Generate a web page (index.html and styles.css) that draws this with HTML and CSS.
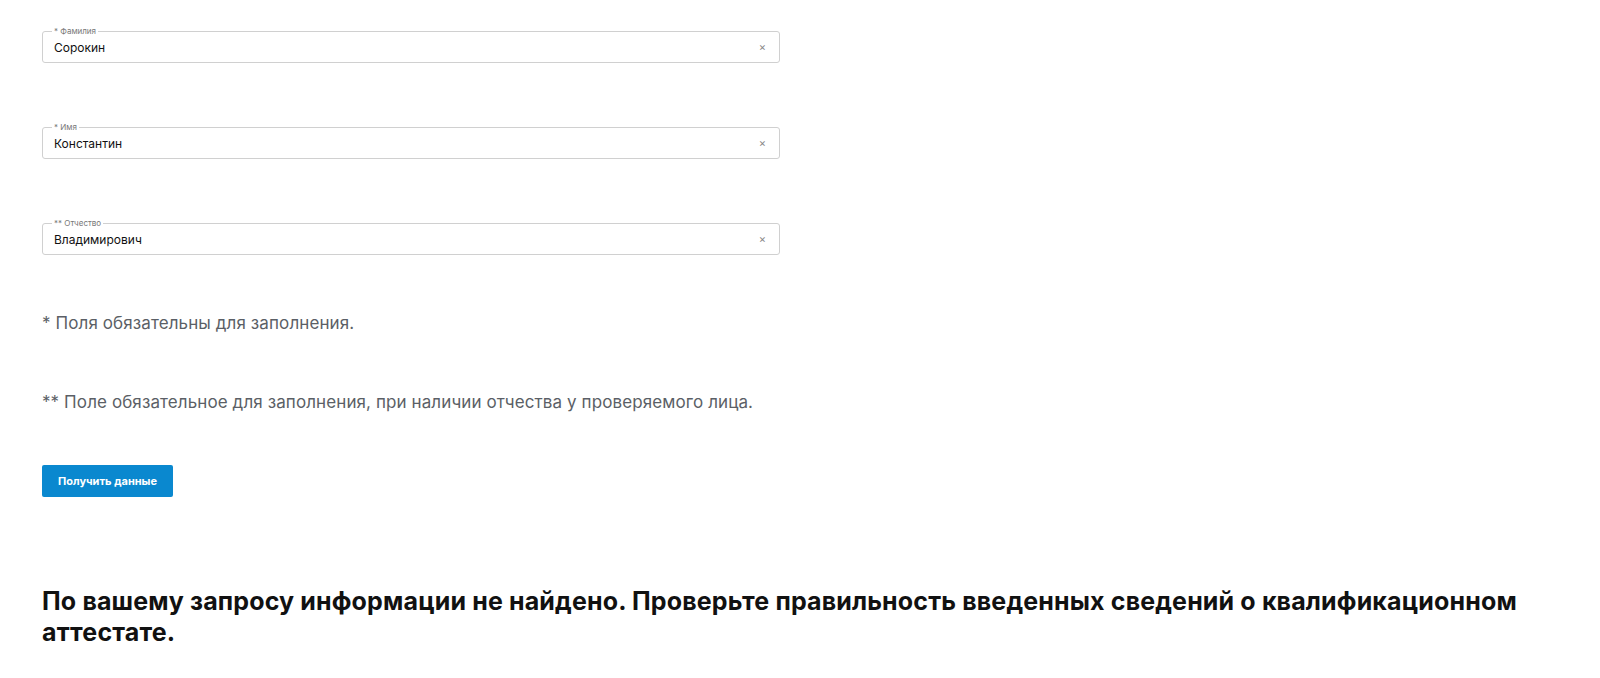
FILE: index.html
```html
<!DOCTYPE html>
<html lang="ru">
<head>
<meta charset="UTF-8">
<title>Проверка аттестата</title>
<link rel="stylesheet" href="styles.css">
</head>
<body>
<div class="page">
  <form class="search-form">
    <div class="field">
      <label>* Фамилия</label>
      <input type="text" value="Сорокин">
      <span class="clear">×</span>
    </div>

    <div class="field">
      <label>* Имя</label>
      <input type="text" value="Константин">
      <span class="clear">×</span>
    </div>

    <div class="field">
      <label>** Отчество</label>
      <input type="text" value="Владимирович">
      <span class="clear">×</span>
    </div>

    <p class="note">* Поля обязательны для заполнения.</p>
    <p class="note">** Поле обязательное для заполнения, при наличии отчества у проверяемого лица.</p>

    <button type="button" class="button">Получить данные</button>
  </form>

  <h3 class="result">По вашему запросу информации не найдено. Проверьте правильность введенных сведений о квалификационном аттестате.</h3>
</div>
</body>
</html>
```

FILE: styles.css
```css
body {
  margin: 0;
  font-family: Inter, "Noto Sans", sans-serif;
  background: #fff;
  color: #000;
}
.page {
  padding: 31px 42px 0 42px;
  width: 1520px;
}
.search-form {
  width: 738px;
}
.field {
  position: relative;
  margin-bottom: 64px;
  height: 32px;
  box-sizing: border-box;
  border: 1px solid #d0d0d0;
  border-radius: 3px;
  display: flex;
  align-items: center;
  padding: 0 28px 0 11px;
}
.field label {
  position: absolute;
  left: 9px;
  top: -5px;
  padding: 0 2px;
  background: #fff;
  font-size: 8px;
  line-height: 9px;
  color: #777;
}
.field input {
  border: none;
  outline: none;
  font-family: inherit;
  font-size: 12px;
  color: #111;
  width: 100%;
  padding: 0;
  background: transparent;
}
.clear {
  position: absolute;
  right: 13px;
  top: 8px;
  font-size: 11px;
  line-height: 14px;
  color: #888;
}
.search-form .field:last-of-type {
  margin-bottom: 58px;
}
.note {
  font-size: 17px;
  letter-spacing: 0.1px;
  line-height: 20px;
  color: #5b5f66;
  margin: 0 0 59px 0;
}
.search-form .note:last-of-type {
  margin-bottom: 53px;
}
.button {
  display: block;
  height: 32px;
  padding: 0 16px;
  background: #0a88cf;
  color: #fff;
  border: none;
  border-radius: 2px;
  font-family: inherit;
  font-weight: 700;
  font-size: 11px;
}
.result {
  margin: 89px 0 0 0;
  font-size: 25px;
  letter-spacing: 0.15px;
  font-weight: 700;
  line-height: 31px;
  color: #111;
}
```
